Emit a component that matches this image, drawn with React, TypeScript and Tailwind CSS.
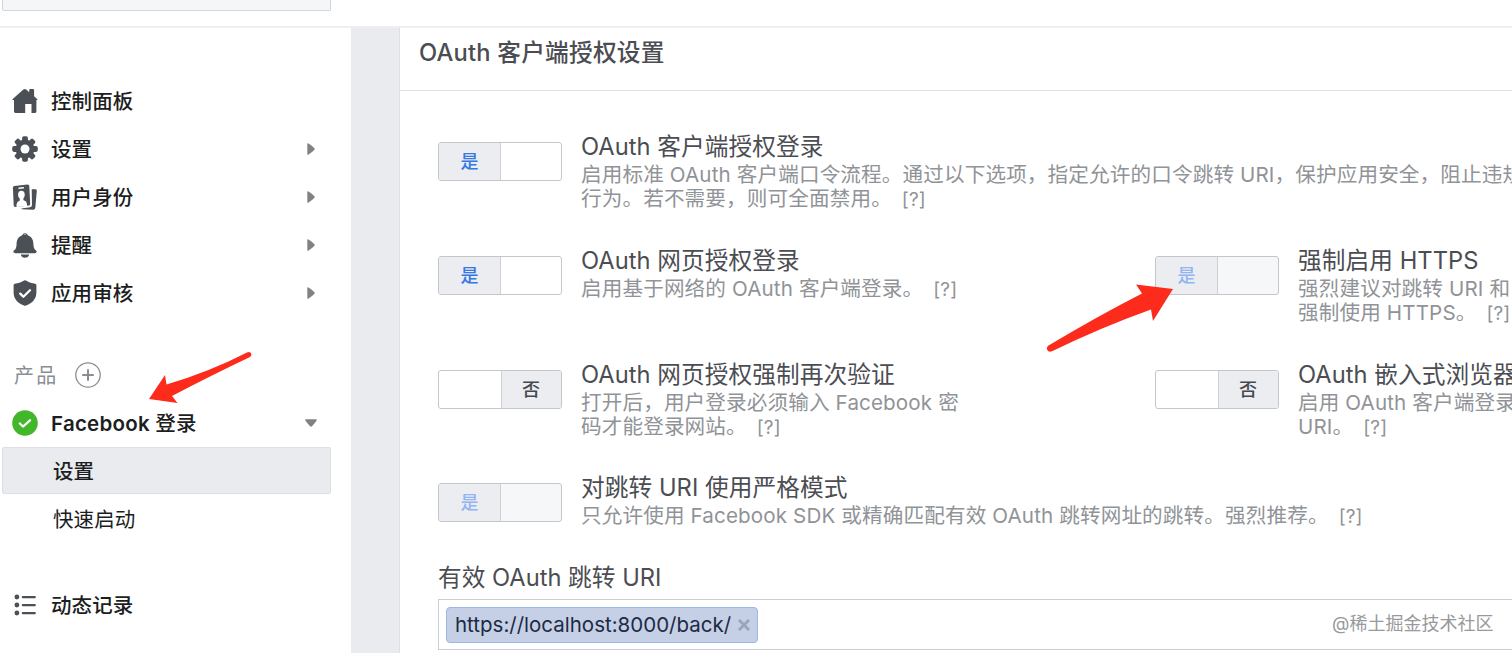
import type { ReactNode } from "react";

type ToggleProps = {
	on: boolean;
	disabled?: boolean;
};

type OptionProps = ToggleProps & {
	title: ReactNode;
	children: ReactNode;
	className?: string;
};

const HomeIcon = () => (
	<svg viewBox="0 0 26 26" className="h-[26px] w-[26px] fill-[#4b4f56]">
		<path d="M11.400 1.600q1.400-1.200 2.800 0l3 2.700V2.200q0-1.200 1.200-1.200h2.500q1.200 0 1.200 1.200v6l3 2.700q1 .9-.2 1.100h-.5v11.600q0 1.400-1.400 1.400h-3.500v-9h-6.300v9H3.400q-1.400 0-1.400-1.400V12H.9q-1.300-.2-.2-1.100z" />
	</svg>
);

const GearIcon = () => (
	<svg viewBox="0 0 26 26" className="h-[26px] w-[26px] fill-[#4b4f56]">
		<defs>
			<mask id="gear-hole">
				<rect width="26" height="26" fill="#fff" />
				<circle cx="13" cy="13" r="4.500" fill="#000" />
			</mask>
		</defs>
		<g mask="url(#gear-hole)">
			<circle cx="13" cy="13" r="9.400" />
			{[0, 45, 90, 135].map((angle) => (
				<rect key={angle} x="10.100" y="0.200" width="5.800" height="25.600" rx="1.800" transform={`rotate(${angle} 13 13)`} />
			))}
		</g>
	</svg>
);

const RolesIcon = () => (
	<svg viewBox="0 0 26 26" className="h-[26px] w-[26px]">
		<path fill="#4b4f56" d="M2.300 2 15.500.4q1.700 0 1.800 1.500l.9 18.200q0 1.300-1 1.500L3.300 23q-1.500 0-1.600-1.400L.9 3.700Q.9 2.200 2.300 2z" />
		<path fill="#4b4f56" d="m19.700 5.200 3.900.1q1.300.3 1.200 1.600l-1.500 16.900q-.3 2-2.100 2L9.500 25.200v-.7l8.500-1.200q2-.3 2-2.300z" />
		<g fill="#fff">
			<rect x="6.300" y="3.300" width="5.800" height="1.500" rx=".7" transform="rotate(-5 9 4)" />
			<ellipse cx="9.400" cy="10.700" rx="3.300" ry="4" />
			<path d="M7.700 14h3.600l.2 2.200q3 .6 3.400 3.200l.1 2.600-10.400.9-.1-2.500q.3-2.900 3.300-3.800z" />
		</g>
	</svg>
);

const BellIcon = () => (
	<svg viewBox="0 0 26 26" className="h-[26px] w-[26px] fill-[#4b4f56]">
		<path fillRule="evenodd" d="M10.200 3.300a2.900 2.900 0 0 1 5.600 0c4 1.500 5.500 4.700 5.600 8.700.1 3.600.8 5.300 2.400 6.300 1.600 1.400.7 2.900-1 2.900H3.200c-1.700 0-2.600-1.500-1-2.900 1.600-1 2.300-2.700 2.400-6.300.1-4 1.600-7.200 5.600-8.700zm1.500-.5a5 5 0 0 1 2.600 0 1.400 1.400 0 0 0-2.600 0z" />
		<path d="M8.800 22.500h8.400c-.6 2.100-2 3.200-4.200 3.200s-3.600-1.100-4.200-3.200z" />
	</svg>
);

const ShieldIcon = () => (
	<svg viewBox="0 0 26 26" className="h-[26px] w-[26px]">
		<path fill="#4b4f56" d="M12.100.5q.9-.5 1.800 0C17 2.300 20 3.300 23.200 3.800q1.200.2 1.200 1.400v7c0 6.300-3.600 10.900-10.400 13.300q-1 .4-2 0C5.200 23.100 1.600 18.500 1.600 12.200v-7q0-1.200 1.200-1.400C6 3.300 9 2.300 12.100.5z" />
		<path fill="none" stroke="#fff" strokeWidth="2.300" strokeLinecap="round" strokeLinejoin="round" d="m8.200 13.600 3.200 3.100 6.600-6.500" />
	</svg>
);

const CheckIcon = () => (
	<svg viewBox="0 0 26 26" className="h-[26px] w-[26px]">
		<circle cx="13" cy="13" r="12.800" fill="#42b72a" />
		<path fill="none" stroke="#fff" strokeWidth="2.300" strokeLinecap="round" strokeLinejoin="round" d="m7.800 13.500 3.300 3 6.900-6.200" />
	</svg>
);

const ListIcon = () => (
	<svg viewBox="0 0 26 26" className="h-[26px] w-[26px]">
		{[5, 13, 21].map((y) => (
			<g key={y} fill="#4b4f56">
				<circle cx="4.900" cy={y} r="2.400" />
				<rect x="9.800" y={y - 1} width="14" height="2.200" rx="1" />
			</g>
		))}
	</svg>
);

const PlusIcon = () => (
	<svg viewBox="0 0 26 26" className="h-[26px] w-[26px] fill-none stroke-[#8a8d93]">
		<circle cx="13" cy="13" r="12.200" strokeWidth="1.300" />
		<path strokeWidth="2" d="M13 7.200v11.600M7.200 13h11.600" />
	</svg>
);

const Caret = ({ open = false }: { open?: boolean }) => (
	<span className="ml-auto flex w-12 justify-center">
		{open ? (
			<svg viewBox="0 0 12 8" className="h-2 w-3 fill-[#7f8185]">
				<path d="M1.200.3h9.600q1.500 0 .8 1.300Q9.500 4.700 7 7.200q-1 .9-2 0Q2.500 4.700.4 1.600-.3.300 1.200.300z" />
			</svg>
		) : (
			<svg viewBox="0 0 8 12" className="h-3 w-2 fill-[#7f8185]">
				<path d="M.3 1.200v9.600q0 1.500 1.300.8Q4.700 9.500 7.200 7q.9-1 0-2Q4.700 2.500 1.600.4.300-.3.300 1.200z" />
			</svg>
		)}
	</span>
);

const navItems = [
	{ label: "控制面板", icon: <HomeIcon />, expandable: false },
	{ label: "设置", icon: <GearIcon />, expandable: true },
	{ label: "用户身份", icon: <RolesIcon />, expandable: true },
	{ label: "提醒", icon: <BellIcon />, expandable: true },
	{ label: "应用审核", icon: <ShieldIcon />, expandable: true },
];

function Sidebar() {
	return (
		<nav className="flex w-[351px] shrink-0 flex-col bg-white pt-[49px] text-[20.5px] text-[#1c1e21]">
			{navItems.map((item) => (
				<div key={item.label} className="flex h-12 items-center gap-[13px] pl-[12px] pr-[16.5px] font-medium">
					{item.icon}
					<span className="pt-[3px] tracking-[0.1px]">{item.label}</span>
					{item.expandable && <Caret />}
				</div>
			))}

			<div className="mt-[34px] flex h-12 items-center gap-[17px] pl-[14px] text-[20px] tracking-[2.2px] text-[#8a8d93]">
				<span className="pt-[2px]">产品</span>
				<PlusIcon />
			</div>
			<div className="flex h-12 items-center gap-[13px] pl-[12px] pr-[16.5px] font-semibold">
				<CheckIcon />
				<span className="pt-[2px] tracking-[0.25px]">
					Facebook <span className="font-medium">登录</span>
				</span>
				<Caret open />
			</div>
			<div className="ml-[2px] flex h-[47px] w-[329px] items-center rounded-[2px] border border-[#dddfe2] bg-[#e9ebee] pl-[50px] pt-[3px] font-medium">
				设置
			</div>
			<div className="mt-px flex h-12 items-center pl-[53px] pt-[3px] tracking-[0.1px]">快速启动</div>
			<div className="mt-[38px] flex h-12 items-center gap-[13px] pl-[12px] font-medium">
				<ListIcon />
				<span className="pt-[3px] tracking-[0.1px]">动态记录</span>
			</div>
		</nav>
	);
}

function Toggle({ on, disabled }: ToggleProps) {
	return (
		<div className={`mt-[10px] flex h-[39px] w-[123.5px] shrink-0 overflow-hidden rounded-[3px] border border-[#c4c6ca] text-[18px] font-medium ${disabled ? "bg-[#f6f7f9]" : "bg-white"}`}>
			{on ? (
				<div className={`flex w-[62px] items-center justify-center border-r border-[#ced0d4] bg-[#ebedf0] ${disabled ? "text-[#93b4f3]" : "text-[#3578e5]"}`}>是</div>
			) : (
				<div className="ml-auto flex w-[60px] items-center justify-center border-l border-[#ced0d4] bg-[#ebedf0] text-[#444950]">否</div>
			)}
		</div>
	);
}

function Option({ title, children, on, disabled, className = "" }: OptionProps) {
	return (
		<div className={`flex gap-[19.5px] ${className}`}>
			<Toggle on={on} disabled={disabled} />
			<div className="whitespace-nowrap">
				<div className="h-[31px] text-[23.7px] leading-[30px] tracking-[0.05px] text-[#4b4d52]">{title}</div>
				<div className="text-[20.6px] leading-6 tracking-[0.13px] text-[#909397]">{children}</div>
			</div>
		</div>
	);
}

const Help = () => <span className="ml-[10px] text-[19px]">[?]</span>;

function Settings() {
	return (
		<main className="flex min-w-0 flex-1 flex-col overflow-hidden border-l border-[#dddfe2] bg-white">
			<h2 className="h-[63px] shrink-0 whitespace-nowrap border-b border-[#dddfe2] pl-[19px] pt-[10px] text-[23.7px] font-medium leading-[30px] tracking-[0.22px] text-[#4b4d52]">
				OAuth 客户端授权设置
			</h2>
			<div className="pl-[38px] pt-[41px]">
				<Option on title="OAuth 客户端授权登录" className="h-[114px]">
					启用标准 OAuth 客户端口令流程。通过以下选项，指定允许的口令跳转 URI，保护应用安全，阻止违规
					<br />
					行为。若不需要，则可全面禁用。
					<Help />
				</Option>
				<div className="flex h-[114px]">
					<Option on title="OAuth 网页授权登录" className="w-[717px] shrink-0">
						启用基于网络的 OAuth 客户端登录。
						<Help />
					</Option>
					<Option on disabled title="强制启用 HTTPS">
						强烈建议对跳转 URI 和
						<br />
						强制使用 HTTPS。
						<Help />
					</Option>
				</div>
				<div className="flex h-[113px]">
					<Option on={false} title="OAuth 网页授权强制再次验证" className="w-[717px] shrink-0">
						打开后，用户登录必须输入 Facebook 密
						<br />
						码才能登录网站。
						<Help />
					</Option>
					<Option on={false} title="OAuth 嵌入式浏览器">
						启用 OAuth 客户端登录
						<br />
						URI。
						<Help />
					</Option>
				</div>
				<Option on disabled title="对跳转 URI 使用严格模式" className="h-[91px]">
					只允许使用 Facebook SDK 或精确匹配有效 OAuth 跳转网址的跳转。强烈推荐。
					<Help />
				</Option>

				<label className="block h-[35px] text-[23.7px] leading-[28px] text-[#4b4d52]">有效 OAuth 跳转 URI</label>
				<div className="relative flex h-[51px] w-[1100px] items-center border border-[#ccced2] pl-[7px]">
					<span className="flex h-9 w-[312px] items-center rounded-[4px] border border-[#9cb8e8] bg-[#c5d0e6] pl-[8px] pt-px text-[20.5px] text-[#1d2a44]">
						https://localhost:8000/back/
						<svg viewBox="0 0 12 12" className="mb-px ml-[7px] h-3 w-3 shrink-0 fill-none stroke-[#9aa3b8]" strokeWidth="2.800">
							<path d="m1 1 10 10M11 1 1 11" />
						</svg>
					</span>
					<span className="absolute left-[893px] top-[10px] whitespace-nowrap text-[18px] leading-7 text-[#97999c]">@稀土掘金技术社区</span>
				</div>
			</div>
		</main>
	);
}

export default function App() {
	return (
		<div className="relative flex h-[653px] w-[1512px] flex-col overflow-hidden bg-[#e9ebee] font-[Inter,'Noto_Sans_CJK_SC',sans-serif]">
			<header className="h-7 shrink-0 border-b-2 border-[#eeeff1] bg-white">
				<div className="ml-[2px] h-[11px] w-[329px] rounded-b-[2px] border border-t-0 border-[#d3d6da] bg-[#f5f6f7]" />
			</header>
			<div className="flex min-h-0 flex-1">
				<Sidebar />
				<div className="w-12 shrink-0 bg-[#e9ebee]" />
				<Settings />
			</div>

			{/* Hand-drawn pointers */}
			<svg viewBox="0 0 1512 653" className="pointer-events-none absolute inset-0 h-full w-full fill-[#fc2b1c]">
				<path d="M149 399 165 375 166.500 384.500Q209 372 247 352.500 250 351 251.200 353.500 252 356 249 357.500 212 375 172 396L177.500 403z" />
				<path d="M1173 289 1136 284.500 1142 293.500Q1098 316 1048.500 345.500 1046 347.500 1047.300 350 1048.500 352.500 1052 351.300 1102 327 1151 309.500L1153 321z" />
			</svg>
		</div>
	);
}
